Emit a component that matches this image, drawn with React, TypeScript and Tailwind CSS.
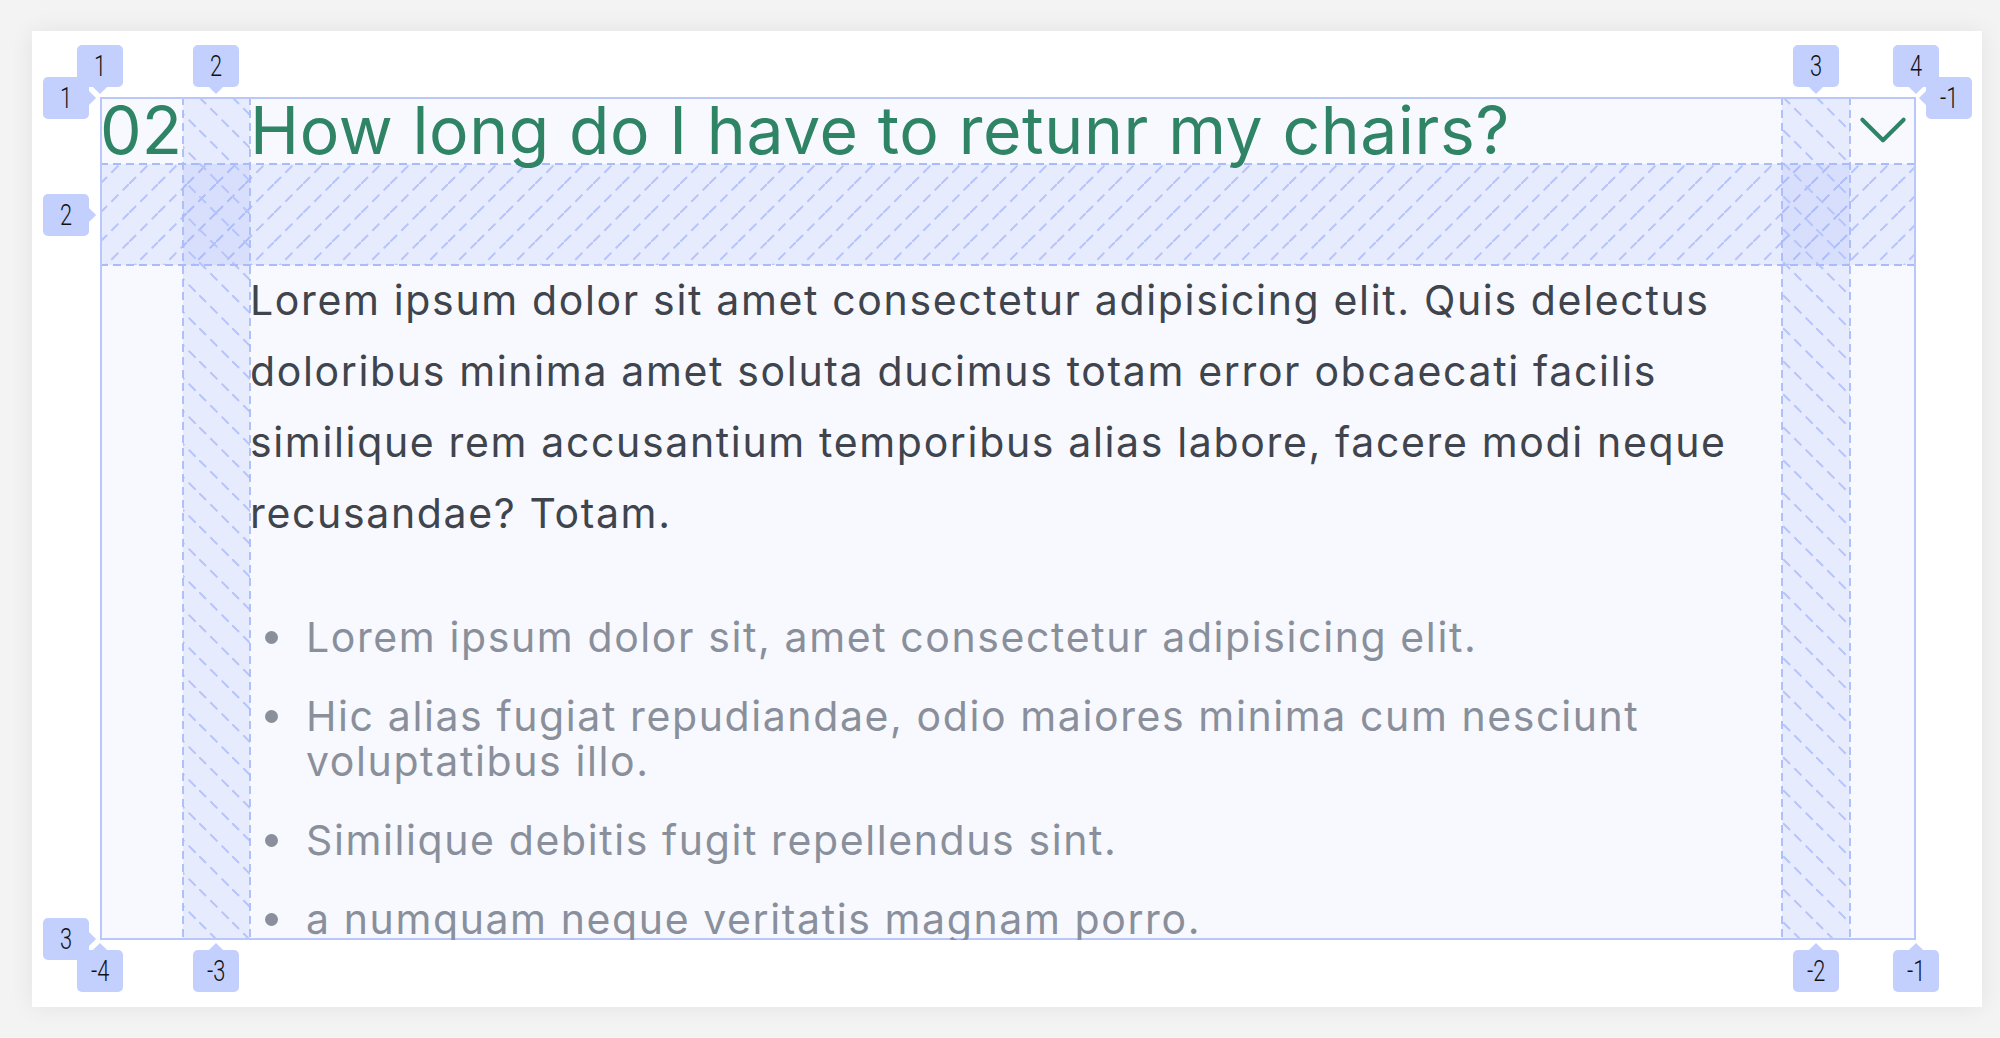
import React from "react";

type Arrow = "down" | "up" | "right" | "left";

const arrowPos: Record<Arrow, string> = {
  down: "left-1/2 -bottom-[5px] -translate-x-1/2",
  up: "left-1/2 -top-[5px] -translate-x-1/2",
  right: "top-1/2 -right-[5px] -translate-y-1/2",
  left: "top-1/2 -left-[5px] -translate-y-1/2",
};

// devtools style line-number badge
function LineLabel({ text, arrow, className }: { text: string; arrow: Arrow; className: string }) {
  return (
    <div className={"absolute w-[46px] h-[42px] " + className}>
      <div className={"absolute w-[10px] h-[10px] rotate-45 bg-[#c3cffc] " + arrowPos[arrow]} />
      <div className="relative w-full h-full rounded-[5px] bg-[#c3cffc] flex items-center justify-center text-[#111]">
        <span className="inline-block scale-x-[0.75] font-['Roboto',sans-serif] font-light text-[29px] leading-none">
          {text}
        </span>
      </div>
    </div>
  );
}

function GridOverlay() {
  const dash = "#a9bbfa";
  const gapFill = "rgba(104,132,246,0.11)";
  return (
    <svg className="absolute inset-0 pointer-events-none" width="1816" height="843" viewBox="0 0 1816 843">
      <defs>
        <pattern id="hatchRow" width="29" height="29" patternUnits="userSpaceOnUse">
          <path d="M0 29 L29 0" stroke="#b6c4fb" strokeWidth="2" strokeDasharray="10 6" />
        </pattern>
        <pattern id="hatchCol" width="33" height="33" patternUnits="userSpaceOnUse">
          <path d="M0 0 L33 33" stroke="#b6c4fb" strokeWidth="2" strokeDasharray="10 6" />
        </pattern>
      </defs>
      <rect x="0" y="67" width="1816" height="101" fill={gapFill} />
      <rect x="0" y="67" width="1816" height="101" fill="url(#hatchRow)" />
      <rect x="83" y="0" width="67" height="843" fill={gapFill} />
      <rect x="83" y="0" width="67" height="843" fill="url(#hatchCol)" />
      <rect x="1682" y="0" width="68" height="843" fill={gapFill} />
      <rect x="1682" y="0" width="68" height="843" fill="url(#hatchCol)" />
      <g stroke={dash} strokeWidth="1.8" strokeDasharray="8 5">
        <line x1="83" y1="0" x2="83" y2="843" />
        <line x1="150" y1="0" x2="150" y2="843" />
        <line x1="1682" y1="0" x2="1682" y2="843" />
        <line x1="1750" y1="0" x2="1750" y2="843" />
        <line x1="0" y1="67" x2="1816" y2="67" />
        <line x1="0" y1="168" x2="1816" y2="168" />
      </g>
      <rect x="1" y="1" width="1814" height="841" fill="none" stroke="#b9c7fb" strokeWidth="2" />
    </svg>
  );
}

const bullets = [
  "Lorem ipsum dolor sit, amet consectetur adipisicing elit.",
  "Hic alias fugiat repudiandae, odio maiores minima cum nesciunt voluptatibus illo.",
  "Similique debitis fugit repellendus sint.",
  "a numquam neque veritatis magnam porro.",
];

export default function App() {
  return (
    <div className="min-h-screen bg-[#f3f3f3] pl-[32px] pr-[18px] pt-[31px] pb-[31px] font-['Inter',sans-serif]">
      <div className="bg-white shadow-[0_0_22px_rgba(0,0,0,0.07)] pl-[68px] pr-[66px] pt-[66px] pb-[67px]">
        <div className="relative grid grid-cols-[83px_1fr_66px] grid-rows-[67px_675px] gap-x-[67px] gap-y-[101px] bg-[#f8f9ff]">
          <GridOverlay />
          <div className="relative text-[66px] leading-none text-[#2f8466]">02</div>
          <h3 className="relative text-[66px] leading-none text-[#2f8466] tracking-[0.6px] whitespace-nowrap">
            How long do I have to retunr my chairs?
          </h3>
          <div className="relative flex items-start justify-center">
            <svg width="66" height="66" viewBox="0 0 24 24" fill="none" stroke="#2f8466" strokeWidth="1.5">
              <path strokeLinecap="round" strokeLinejoin="round" d="m19.5 8.25-7.5 7.5-7.5-7.5" />
            </svg>
          </div>
          <div className="col-start-2 relative overflow-hidden">
            <p className="text-[41px] leading-[71px] tracking-[1.65px] text-[#3f444d]">
              Lorem ipsum dolor sit amet consectetur adipisicing elit. Quis delectus doloribus minima amet soluta
              ducimus totam error obcaecati facilis similique rem accusantium temporibus alias labore, facere modi
              neque recusandae? Totam.
            </p>
            <ul className="mt-[66px] flex flex-col gap-[34px] text-[41px] leading-[45px] tracking-[1.6px] text-[#8a909b]">
              {bullets.map((b) => (
                <li key={b} className="flex items-start">
                  <span className="shrink-0 w-[13px] h-[13px] rounded-full bg-[#8a909b] mt-[16px] ml-[15px] mr-[28px]" />
                  <span>{b}</span>
                </li>
              ))}
            </ul>
          </div>

          <LineLabel text="1" arrow="down" className="left-[-23px] top-[-52px]" />
          <LineLabel text="2" arrow="down" className="left-[93px] top-[-52px]" />
          <LineLabel text="3" arrow="down" className="left-[1693px] top-[-52px]" />
          <LineLabel text="4" arrow="down" className="left-[1793px] top-[-52px]" />
          <LineLabel text="1" arrow="right" className="left-[-57px] top-[-20px]" />
          <LineLabel text="2" arrow="right" className="left-[-57px] top-[97px]" />
          <LineLabel text="3" arrow="right" className="left-[-57px] top-[821px]" />
          <LineLabel text="-1" arrow="left" className="left-[1826px] top-[-20px]" />
          <LineLabel text="-4" arrow="up" className="left-[-23px] top-[853px]" />
          <LineLabel text="-3" arrow="up" className="left-[93px] top-[853px]" />
          <LineLabel text="-2" arrow="up" className="left-[1693px] top-[853px]" />
          <LineLabel text="-1" arrow="up" className="left-[1793px] top-[853px]" />
        </div>
      </div>
    </div>
  );
}
